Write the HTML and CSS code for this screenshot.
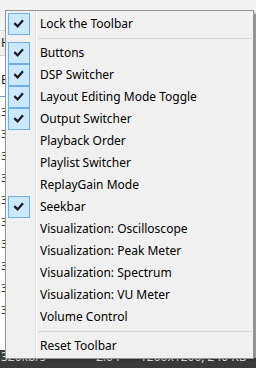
FILE: index.html
```html
<!DOCTYPE html>
<html>
<head>
<meta charset="utf-8">
<link rel="stylesheet" href="styles.css">
</head>
<body>
<div class="app">
  <div class="titlebar"></div>
  <div class="toolbar"><span class="tb-text">H</span></div>
  <div class="tabs"><span class="tb-text">E</span></div>
  <div class="list">
    <div class="row">3</div>
    <div class="row">3</div>
    <div class="row">3</div>
    <div class="row">3</div>
    <div class="row">3</div>
    <div class="row">3</div>
    <div class="row">3</div>
    <div class="row">3</div>
    <div class="row">3</div>
    <div class="row">3</div>
  </div>
  <div class="status">
    <span class="st-a">320kb/s</span>
    <span class="st-b">2:04</span>
    <span class="st-c">1200x1200, 240 KB</span>
  </div>
  <div class="rightstrip"></div>

  <div class="menu">
    <div class="item checked"><span class="box"><svg width="22" height="22" viewBox="0 0 22 22"><path d="M6.3 10.2 L9.6 13.4 L15 7.2" fill="none" stroke="#1e1e1e" stroke-width="2.3"/></svg></span><span class="label">Lock the Toolbar</span></div>
    <div class="sep"></div>
    <div class="item checked"><span class="box"><svg width="22" height="22" viewBox="0 0 22 22"><path d="M6.3 10.2 L9.6 13.4 L15 7.2" fill="none" stroke="#1e1e1e" stroke-width="2.3"/></svg></span><span class="label">Buttons</span></div>
    <div class="item checked"><span class="box"><svg width="22" height="22" viewBox="0 0 22 22"><path d="M6.3 10.2 L9.6 13.4 L15 7.2" fill="none" stroke="#1e1e1e" stroke-width="2.3"/></svg></span><span class="label">DSP Switcher</span></div>
    <div class="item checked"><span class="box"><svg width="22" height="22" viewBox="0 0 22 22"><path d="M6.3 10.2 L9.6 13.4 L15 7.2" fill="none" stroke="#1e1e1e" stroke-width="2.3"/></svg></span><span class="label">Layout Editing Mode Toggle</span></div>
    <div class="item checked"><span class="box"><svg width="22" height="22" viewBox="0 0 22 22"><path d="M6.3 10.2 L9.6 13.4 L15 7.2" fill="none" stroke="#1e1e1e" stroke-width="2.3"/></svg></span><span class="label">Output Switcher</span></div>
    <div class="item"><span class="box"></span><span class="label">Playback Order</span></div>
    <div class="item"><span class="box"></span><span class="label">Playlist Switcher</span></div>
    <div class="item"><span class="box"></span><span class="label">ReplayGain Mode</span></div>
    <div class="item checked"><span class="box"><svg width="22" height="22" viewBox="0 0 22 22"><path d="M6.3 10.2 L9.6 13.4 L15 7.2" fill="none" stroke="#1e1e1e" stroke-width="2.3"/></svg></span><span class="label">Seekbar</span></div>
    <div class="item"><span class="box"></span><span class="label">Visualization: Oscilloscope</span></div>
    <div class="item"><span class="box"></span><span class="label">Visualization: Peak Meter</span></div>
    <div class="item"><span class="box"></span><span class="label">Visualization: Spectrum</span></div>
    <div class="item"><span class="box"></span><span class="label">Visualization: VU Meter</span></div>
    <div class="item"><span class="box"></span><span class="label">Volume Control</span></div>
    <div class="sep"></div>
    <div class="item"><span class="box"></span><span class="label">Reset Toolbar</span></div>
  </div>
</div>
</body>
</html>
```

FILE: styles.css
```css
html, body {
  margin: 0;
  padding: 0;
}
body {
  width: 256px;
  height: 368px;
  overflow: hidden;
  font-family: "Noto Sans", "Liberation Sans", sans-serif;
}
.app {
  position: relative;
  width: 256px;
  height: 368px;
  background: #ffffff;
  display: flex;
  flex-direction: column;
  overflow: hidden;
}
.titlebar {
  height: 30px;
  background: #f3f3f3;
  border-bottom: 1px solid #d9d9d9;
  flex: none;
}
.toolbar, .tabs {
  height: 24px;
  background: #f0f0f0;
  border-bottom: 1px solid #d4d4d4;
  flex: none;
  font-size: 12px;
  line-height: 24px;
  padding-left: 1px;
  color: #222;
}
.tabs {
  height: 40px;
  line-height: 48px;
  background: #ffffff;
  border-bottom: 1px solid #6a9bd1;
}
.list {
  flex: 1;
  padding-top: 4px;
}
.row {
  height: 22px;
  font-size: 11px;
  line-height: 22px;
  color: #333;
  padding-left: 1px;
}
.status {
  position: absolute;
  left: 0;
  right: 0;
  bottom: 0;
  height: 18px;
  background: #3a3a3a;
  color: #e6e6e6;
  font-size: 12px;
  line-height: 14px;
  display: flex;
  white-space: nowrap;
}
.st-a { width: 95px; padding-left: 1px; }
.st-b { width: 44px; }
.st-c { flex: 1; }
.rightstrip {
  position: absolute;
  right: 0;
  top: 14px;
  width: 3px;
  bottom: 10px;
  background: #a7a7a7;
}
.menu {
  position: absolute;
  left: 5px;
  top: 10px;
  width: 244px;
  padding: 2px 1px 1px 2px;
  border: 1px solid #979797;
  background:
    linear-gradient(to right, transparent 29px, #e2e2e2 29px, #e2e2e2 30px, #ffffff 30px, #ffffff 31px, transparent 31px),
    #f0f0f0;
  font-size: 12px;
  color: #000;
  box-shadow: 1px 1px 2px rgba(0,0,0,0.25);
}
.item {
  height: 22px;
  display: flex;
  align-items: center;
}
.box {
  width: 22px;
  height: 22px;
  box-sizing: border-box;
  flex: none;
  margin-right: 10px;
}
.checked .box {
  background: #cce8ff;
  border: 1px solid #6fb0e4;
}
.checked .box svg {
  display: block;
  margin: -1px;
}
.label {
  white-space: nowrap;
  line-height: 22px;
}
.sep {
  height: 7px;
  margin-left: 30px;
  background: linear-gradient(to bottom, transparent 3px, #d7d7d7 3px, #d7d7d7 4px, transparent 4px);
}
```
